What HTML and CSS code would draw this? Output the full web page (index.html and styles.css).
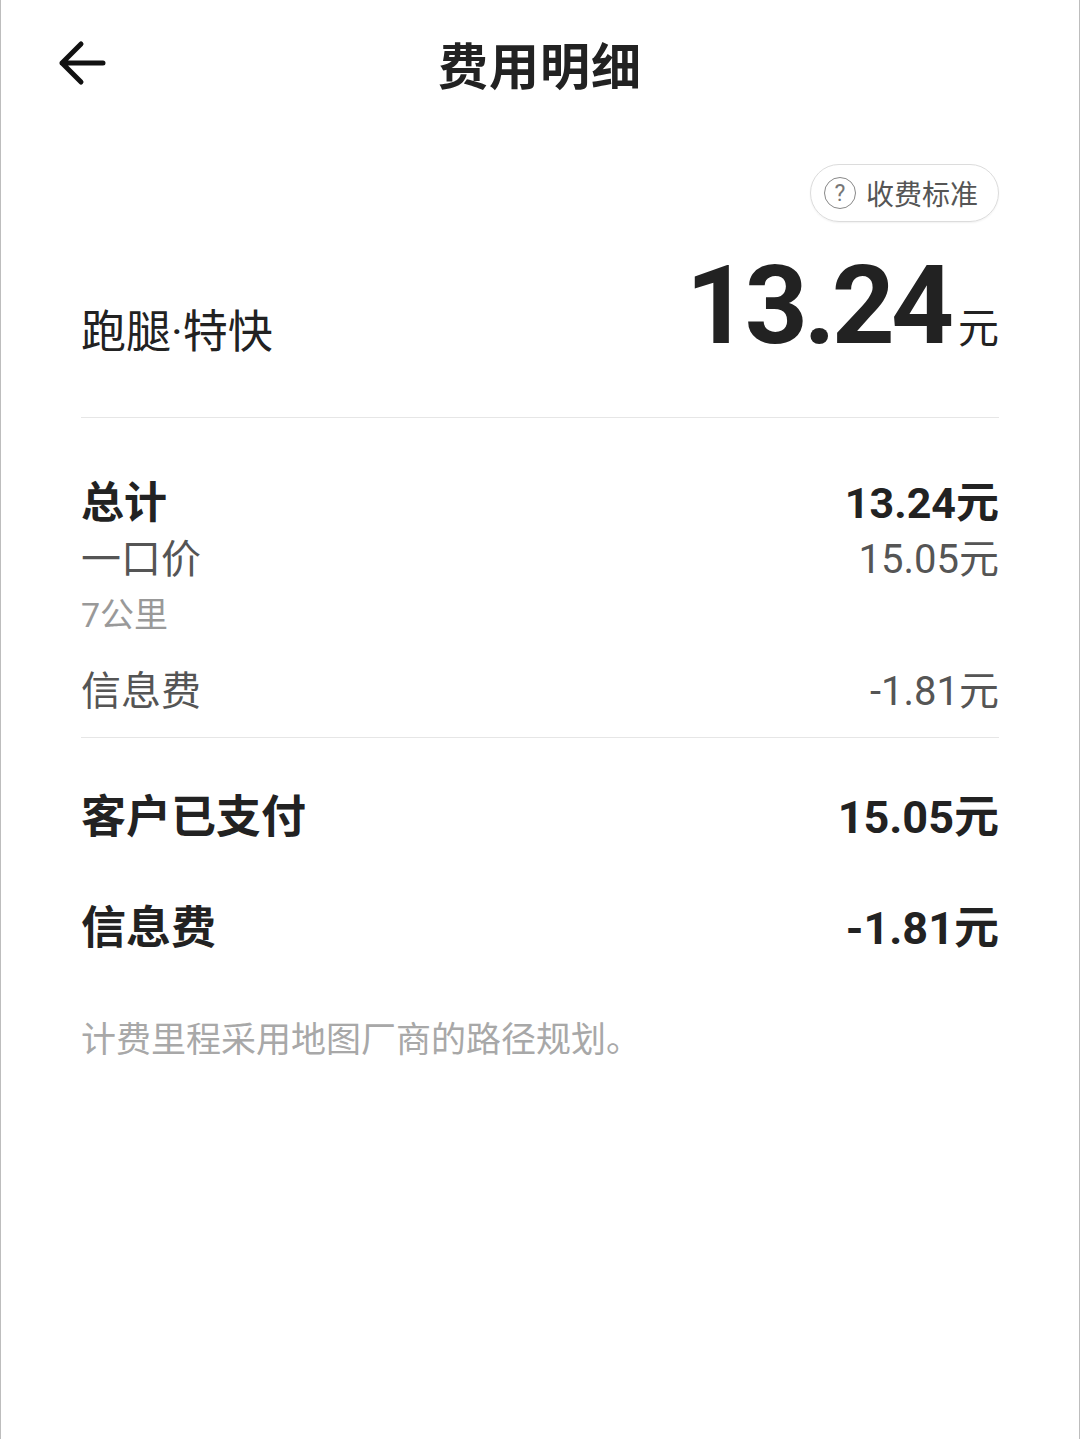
FILE: index.html
```html
<!DOCTYPE html>
<html lang="zh-CN">
<head>
<meta charset="utf-8"/>
<link rel="stylesheet" href="styles.css">
</head>
<body>
<div class="page">
    <div class="header">
        <div class="back">
            <svg width="50" height="46" viewBox="0 0 50 46">
                <path d="M47 23 H6 M25 4 L6 23 L25 42" fill="none" stroke="#111" stroke-width="5" stroke-linecap="round" stroke-linejoin="round"/>
            </svg>
        </div>
        <h1>费用明细</h1>
        <div></div>
    </div>

    <div class="content">
        <div class="rule-row">
            <div class="rule-btn">
                <span class="qmark">?</span>
                <span>收费标准</span>
            </div>
        </div>

        <div class="summary">
            <div class="service">跑腿·特快</div>
            <div class="big-price"><span class="num">13.24</span><span class="unit">元</span></div>
        </div>

        <div class="section">
            <div class="row total">
                <span>总计</span>
                <span class="num">13.24元</span>
            </div>
            <div class="row item">
                <span>一口价</span>
                <span class="num">15.05元</span>
            </div>
            <div class="row sub">
                <span>7公里</span>
            </div>
            <div class="row item fee">
                <span>信息费</span>
                <span class="num">-1.81元</span>
            </div>
        </div>

        <div class="section paid">
            <div class="row strong">
                <span>客户已支付</span>
                <span class="num">15.05元</span>
            </div>
            <div class="row strong">
                <span>信息费</span>
                <span class="num">-1.81元</span>
            </div>
        </div>

        <p class="note">计费里程采用地图厂商的路径规划。</p>
    </div>
</div>
</body>
</html>
```

FILE: styles.css
```css
html, body {
    margin:0;
    padding:0;
    background:#fff;
    font-family: Roboto, "Noto Sans CJK SC", sans-serif;
    color:#222;
}
.page {
    min-height:1439px;
    box-sizing:border-box;
    border-left:1px solid #bdbdbd;
    border-right:1px solid #bdbdbd;
}
.header {
    display:grid;
    grid-template-columns: 1fr auto 1fr;
    align-items:center;
    height:126px;
}
.back {
    padding-left:55px;
    display:flex;
    align-items:center;
}
.header h1 {
    margin:0;
    font-size:50px;
    font-weight:700;
    color:#222;
    letter-spacing:1px;
}
.content {
    padding:0 80px;
}
.rule-row {
    display:flex;
    justify-content:flex-end;
    margin-top:38px;
}
.rule-btn {
    display:flex;
    align-items:center;
    gap:10px;
    height:56px;
    padding:0 20px 0 13px;
    border:1px solid #dcdcdc;
    border-radius:30px;
    font-size:28px;
    color:#555;
    box-shadow:0 1px 2px rgba(0,0,0,0.06);
}
.qmark {
    display:flex;
    align-items:center;
    justify-content:center;
    width:30px;
    height:30px;
    border:1.5px solid #888;
    border-radius:50%;
    font-size:23px;
    color:#777;
}
.summary {
    display:flex;
    justify-content:space-between;
    align-items:flex-end;
    padding:29px 0 56px;
    border-bottom:1px solid #e6e6e6;
}
.service {
    font-size:45px;
    color:#222;
}
.big-price {
    display:flex;
    align-items:baseline;
}
.big-price .num {
    font-size:110px;
    font-weight:700;
    letter-spacing:-4px;
    line-height:1;
}
.big-price .unit {
    font-size:41px;
    margin-left:8px;
}
.section {
    padding-top:54px;
    padding-bottom:19px;
    border-bottom:1px solid #e6e6e6;
}
.row {
    display:flex;
    justify-content:space-between;
    align-items:center;
}
.total {
    font-size:43px;
    font-weight:700;
    height:54px;
}
.item {
    font-size:40px;
    color:#555;
    height:60px;
}
.sub {
    font-size:34px;
    color:#999;
    height:52px;
}
.fee {
    margin-top:20px;
}
.paid {
    border-bottom:none;
    padding-top:20px;
    padding-bottom:0;
}
.strong {
    font-size:45px;
    font-weight:700;
    height:111px;
}
.note {
    margin:31px 0 0;
    font-size:35px;
    color:#a8a8a8;
}
```
